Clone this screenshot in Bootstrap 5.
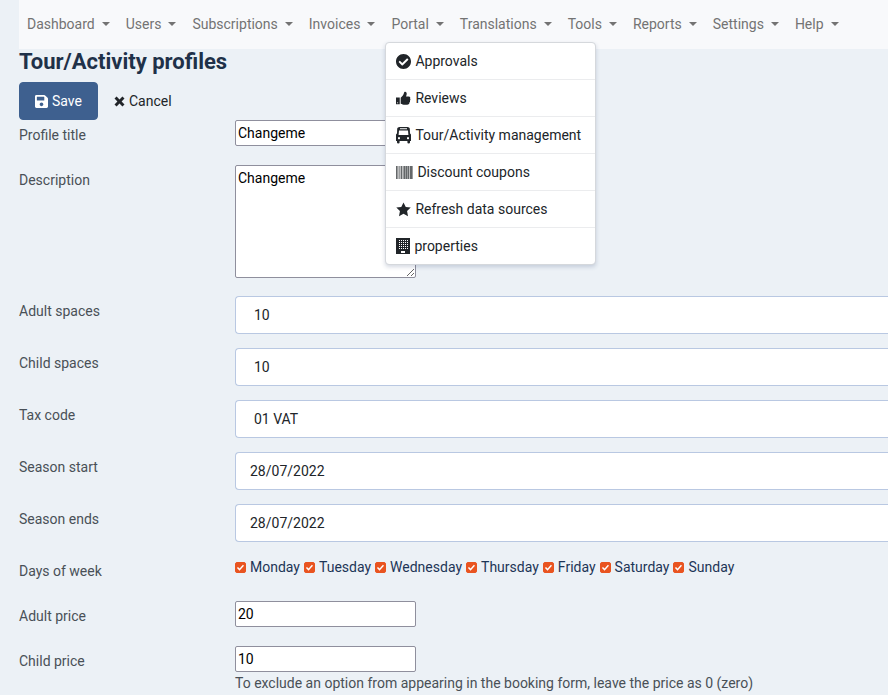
<!DOCTYPE html>
<html lang="en">
<head>
<meta charset="utf-8">
<meta name="viewport" content="width=device-width, initial-scale=1">
<title>Tour/Activity profiles</title>
<link href="https://cdn.jsdelivr.net/npm/bootstrap@5.3.0/dist/css/bootstrap.min.css" rel="stylesheet">
<style>
body { font-family: Roboto, "Liberation Sans", sans-serif; font-size: 14px; line-height: 22px; background: #ecf1f6; color: #495057; overflow-x: hidden; }
.page { padding-left: 19px; }
.topbar { background: #f8f9fb; padding: 4px 0 7px; }
.topbar .nav-link { padding: 9px 8px 7px; color: #737373; }
.topbar .dropdown-toggle::after { margin-left: 7px; border-top-width: 4px; border-left-width: 4px; border-right-width: 4px; vertical-align: 3px; }
.portal-menu { --bs-dropdown-link-color: #212529; font-size: 14px; margin: 0 0 0 2px; padding: 0; min-width: 0; border-color: #d5d8dc; border-radius: 4px; box-shadow: 0 2px 4px rgba(40, 60, 110, .2); overflow: hidden; }
.portal-menu .dropdown-item { display: flex; align-items: center; gap: 4px; padding: 7px 14px 7px 10px; }
.portal-menu li + li { border-top: 1px solid #ebecee; }
.page-title { font-size: 22px; line-height: 25px; font-weight: 700; color: #1f3149; margin-bottom: 8px; }
.tool-btn { font-size: 14px; line-height: 22px; padding: 7px 15px; border-radius: 4px; gap: 4px; }
.tool-save, .tool-save:hover { background: #3e608f; border-color: #3e608f; color: #fff; }
.tool-cancel { color: #212529; gap: 4px; }
.field { display: flex; margin-bottom: 14px; }
.field-name { flex: 0 0 216px; padding-top: 4px; min-height: 31px; }
.field-body { flex: 1 1 0; min-width: 0; }
.plain { display: block; width: 181px; height: 26px; padding: 1px 2px; border: 1px solid #8f8f9d; border-radius: 2px; background: #fff; color: #000; }
textarea.plain { height: 113px; margin-bottom: 4px; }
.wide { font-size: 14px; line-height: 22px; padding: 7px 14px; border: 1px solid #b9c8e2; border-right: 0; border-radius: 4px 0 0 4px; color: #212529; background-image: none; }
select.wide { padding-left: 18px; }
.day { display: inline-flex; align-items: center; gap: 4px; color: #1d3557; }
.day .form-check-input { width: 11px; height: 11px; margin: 0; border-radius: 2px; border-color: #e95420; background-color: #e95420; }
.day .form-check-input:checked { background-image: url("data:image/svg+xml,%3csvg xmlns='http://www.w3.org/2000/svg' viewBox='0 0 11 11'%3e%3cpath d='M1.8 5.6l2.500 2.500 4.800-5.200' fill='none' stroke='%23fff' stroke-width='1.8'/%3e%3c/svg%3e"); }
svg { flex: none; fill: currentColor; }
</style>
<script src="https://cdn.jsdelivr.net/npm/bootstrap@5.3.0/dist/js/bootstrap.bundle.min.js" defer></script>
</head>
<body>
<div class="page">
<nav class="navbar navbar-expand topbar">
  <ul class="navbar-nav">
    <li class="nav-item"><a class="nav-link dropdown-toggle" href="#">Dashboard</a></li>
    <li class="nav-item"><a class="nav-link dropdown-toggle" href="#">Users</a></li>
    <li class="nav-item"><a class="nav-link dropdown-toggle" href="#">Subscriptions</a></li>
    <li class="nav-item"><a class="nav-link dropdown-toggle" href="#">Invoices</a></li>
    <li class="nav-item dropdown"><a class="nav-link dropdown-toggle" href="#" role="button" data-bs-toggle="dropdown" aria-expanded="true">Portal</a>
      <ul class="dropdown-menu portal-menu show">
        <li><a class="dropdown-item" href="#"><svg width="15" height="15" viewBox="8 8 496 496"><path d="M504 256c0 136.967-111.033 248-248 248S8 392.967 8 256 119.033 8 256 8s248 111.033 248 248zM227.314 387.314l184-184c6.248-6.248 6.248-16.379 0-22.627l-22.627-22.627c-6.248-6.249-16.379-6.249-22.628 0L216 308.118l-70.059-70.059c-6.248-6.248-16.379-6.248-22.628 0l-22.627 22.627c-6.248 6.248-6.248 16.379 0 22.627l104 104c6.249 6.249 16.379 6.249 22.628.001z"/></svg>Approvals</a></li>
        <li><a class="dropdown-item" href="#"><svg width="15" height="15" viewBox="0 0 16 15"><path d="M0 6.5h4v7H0zM5 6.6C7 5 8 3.7 8.5 1.6 8.7.6 9.1.3 9.7.4c1.5.2 2 1.500 1.600 3L10.700 5.400h2.900c1.300 0 1.900 1 1.400 2 .6.7.5 1.600-.1 2.200.3.800.1 1.500-.5 2 .1 1.700-.9 2.600-2.600 2.600H9.300C7.500 14.200 6.600 13.200 5 13z"/><circle cx="1.700" cy="12" r=".6" fill="#fff"/></svg>Reviews</a></li>
        <li><a class="dropdown-item" href="#"><svg width="15" height="17" viewBox="0 0 15 17"><path fill-rule="evenodd" d="M3.500 0h8Q13.500 0 13.800 1.500L14 6.500q1 .3 1 1.500V14h-1v1.500q0 1-1.300 1t-1.300-1V14H3.600v1.500q0 1-1.300 1t-1.300-1V14H0V8q0-1.200 1-1.500L1.200 1.500Q1.500 0 3.500 0zM4 1.200v1h7v-1zM3 3.400 2.600 8h9.800L12 3.400zM3 10a1.100 1.100 0 1 0 .01 0zM12 10a1.100 1.100 0 1 0 .01 0z"/></svg>Tour/Activity management</a></li>
        <li><a class="dropdown-item" href="#"><svg width="17" height="13" viewBox="0 0 17 13"><path opacity=".45" d="M0 0h17v13H0z"/><path opacity=".45" d="M0 0h1v13H0zM5 0h1v13H5zM8 0h1v13H8zM10 0h1v13h-1zM12 0h1v13h-1zM14 0h2v13h-2z"/><path fill="#fff" opacity=".35" d="M2 0h1v13H2zM4 0h1v13H4zM6 0h1v13H6zM13 0h1v13h-1z"/></svg>Discount coupons</a></li>
        <li><a class="dropdown-item" href="#"><svg width="15" height="15" viewBox="0 0 16 15"><path d="M8 0l2.400 4.700 5.300.7-3.900 3.700 1 5.500L8 12.100l-4.800 2.500 1-5.500L.3 5.400l5.300-.7z"/></svg>Refresh data sources</a></li>
        <li><a class="dropdown-item" href="#"><svg width="14" height="16" viewBox="0 0 14 16"><path d="M0 0h14v16H0z"/><path fill="none" stroke="#fff" stroke-width="1" stroke-dasharray="1 1" d="M3 2.500h9M3 4.500h9M3 6.500h9M3 8.500h9M3 10.500h9"/><path fill="#fff" d="M5 13h4v2H5z"/></svg>properties</a></li>
      </ul>
    </li>
    <li class="nav-item"><a class="nav-link dropdown-toggle" href="#">Translations</a></li>
    <li class="nav-item"><a class="nav-link dropdown-toggle" href="#">Tools</a></li>
    <li class="nav-item"><a class="nav-link dropdown-toggle" href="#">Reports</a></li>
    <li class="nav-item"><a class="nav-link dropdown-toggle" href="#">Settings</a></li>
    <li class="nav-item"><a class="nav-link dropdown-toggle" href="#">Help</a></li>
  </ul>
</nav>
<main>
  <h1 class="page-title">Tour/Activity profiles</h1>
  <form>
    <div class="d-flex">
      <button type="button" class="btn tool-btn tool-save d-flex align-items-center"><svg width="13" height="13" viewBox="0 32 448 448"><path d="M433.941 129.941l-83.882-83.882A48 48 0 0 0 316.118 32H48C21.490 32 0 53.490 0 80v352c0 26.510 21.490 48 48 48h352c26.510 0 48-21.490 48-48V163.882a48 48 0 0 0-14.059-33.941zM224 416c-35.346 0-64-28.654-64-64 0-35.346 28.654-64 64-64s64 28.654 64 64c0 35.346-28.654 64-64 64zm96-304.520V212c0 6.627-5.373 12-12 12H76c-6.627 0-12-5.373-12-12V108c0-6.627 5.373-12 12-12h228.520c3.183 0 6.235 1.264 8.485 3.515l3.480 3.480A11.996 11.996 0 0 1 320 111.480z"/></svg>Save</button>
      <a href="#" class="btn tool-btn tool-cancel d-flex align-items-center"><svg width="11" height="11" viewBox="0 0 11 11"><path d="M2.600.5 5.500 3.400 8.400.5l2.100 2.100L7.600 5.500l2.900 2.900-2.100 2.100L5.500 7.600l-2.900 2.900L.5 8.400l2.900-2.900L.5 2.600z"/></svg>Cancel</a>
    </div>
    <div class="field"><label class="field-name" for="title">Profile title</label><div class="field-body"><input class="plain" id="title" type="text" value="Changeme"></div></div>
    <div class="field"><label class="field-name" for="desc">Description</label><div class="field-body"><textarea class="plain" id="desc">Changeme</textarea></div></div>
    <div class="field"><label class="field-name" for="adults">Adult spaces</label><div class="field-body"><select class="form-select wide" id="adults"><option>10</option></select></div></div>
    <div class="field"><label class="field-name" for="children">Child spaces</label><div class="field-body"><select class="form-select wide" id="children"><option>10</option></select></div></div>
    <div class="field"><label class="field-name" for="tax">Tax code</label><div class="field-body"><select class="form-select wide" id="tax"><option>01 VAT</option></select></div></div>
    <div class="field"><label class="field-name" for="start">Season start</label><div class="field-body"><input class="form-control wide" id="start" type="text" value="28/07/2022"></div></div>
    <div class="field"><label class="field-name" for="ends">Season ends</label><div class="field-body"><input class="form-control wide" id="ends" type="text" value="28/07/2022"></div></div>
    <div class="field" role="group" aria-labelledby="days"><span class="field-name" id="days">Days of week</span>
      <div class="field-body d-flex flex-wrap align-items-start gap-1">
        <label class="day"><input class="form-check-input" type="checkbox" checked>Monday</label>
        <label class="day"><input class="form-check-input" type="checkbox" checked>Tuesday</label>
        <label class="day"><input class="form-check-input" type="checkbox" checked>Wednesday</label>
        <label class="day"><input class="form-check-input" type="checkbox" checked>Thursday</label>
        <label class="day"><input class="form-check-input" type="checkbox" checked>Friday</label>
        <label class="day"><input class="form-check-input" type="checkbox" checked>Saturday</label>
        <label class="day"><input class="form-check-input" type="checkbox" checked>Sunday</label>
      </div></div>
    <div class="field"><label class="field-name" for="aprice">Adult price</label><div class="field-body"><input class="plain" id="aprice" type="text" value="20"></div></div>
    <div class="field mb-0"><label class="field-name" for="cprice">Child price</label><div class="field-body"><input class="plain" id="cprice" type="text" value="10">To exclude an option from appearing in the booking form, leave the price as 0 (zero)</div></div>
  </form>
</main>
</div>
</body>
</html>
